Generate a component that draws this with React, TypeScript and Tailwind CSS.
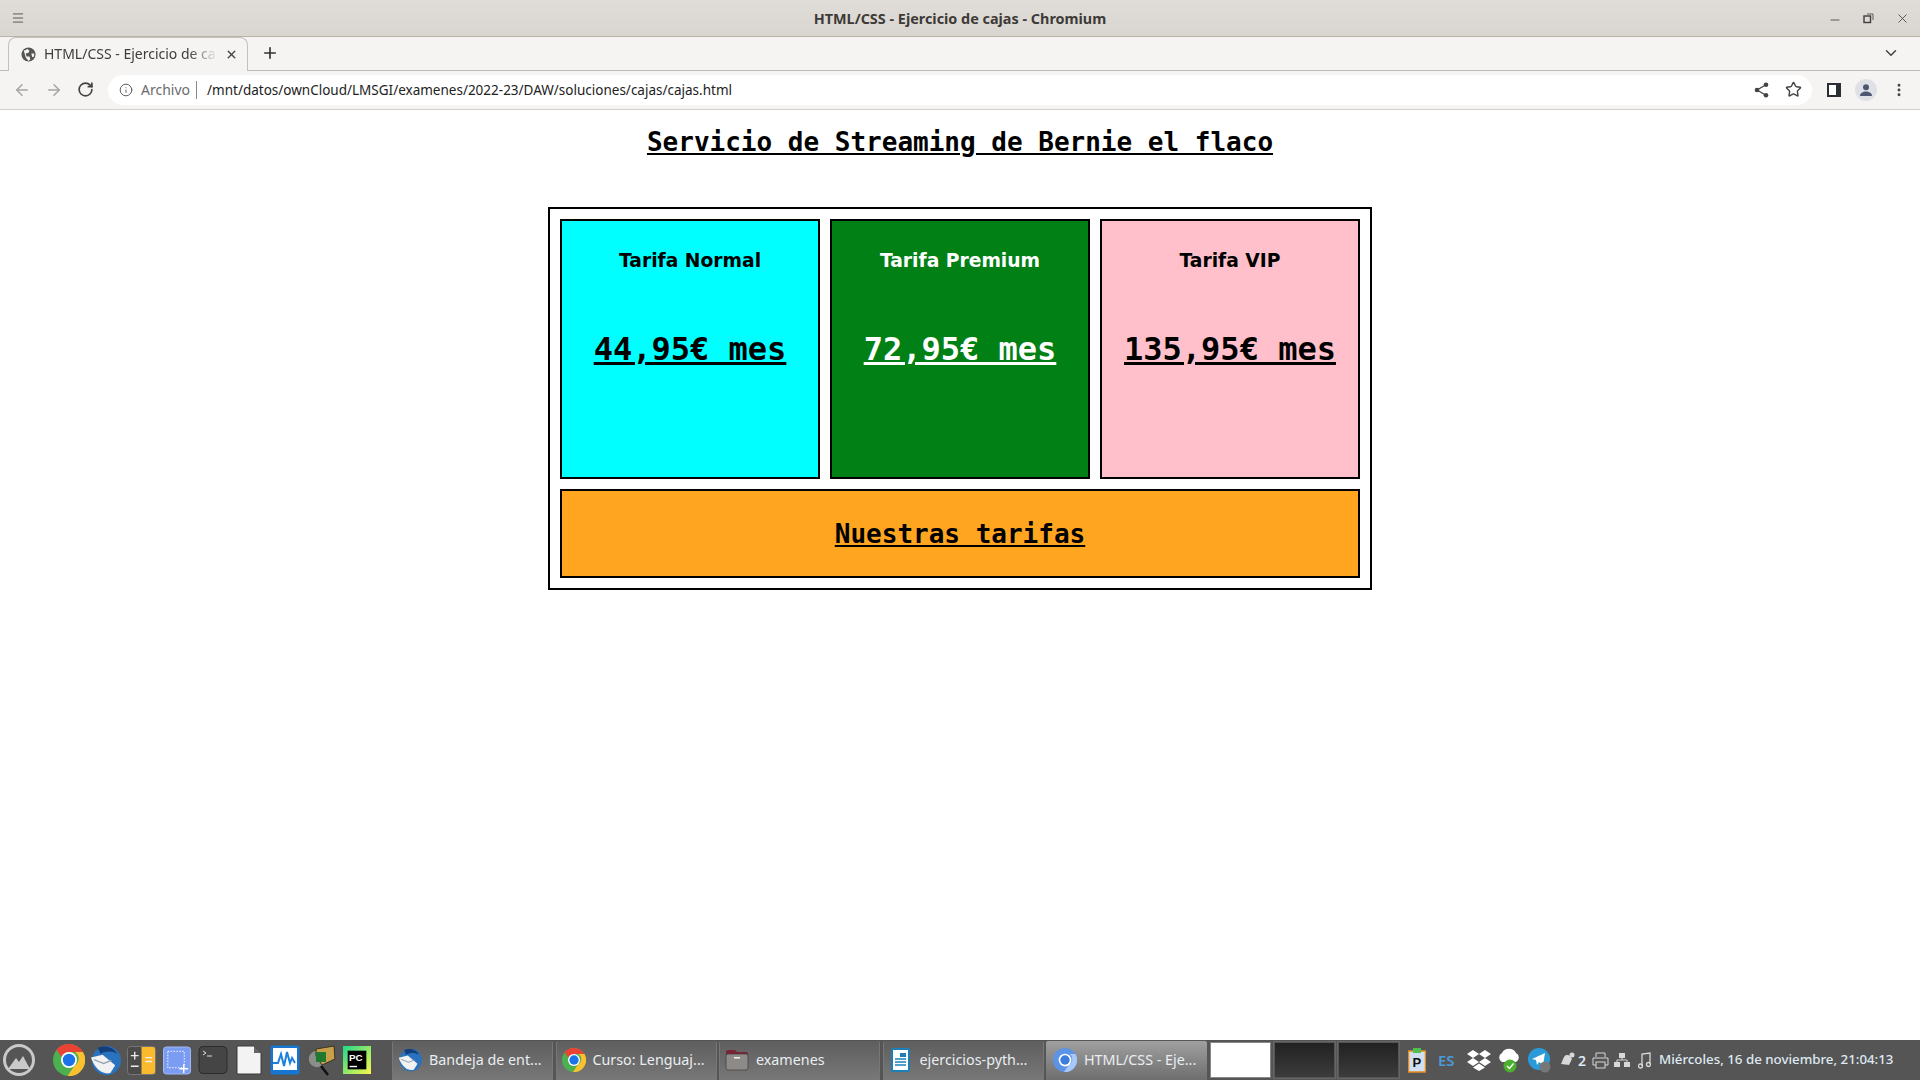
import { ArrowLeft, ArrowRight, ChevronDown, EllipsisVertical, Info, Menu, Minus, Plus, RotateCw, Star, X } from "lucide-react";

const uiFont = "font-['Noto_Sans',sans-serif]";

const ChromeLogo = ({ size = 32 }: { size?: number }) => (
  <svg width={size} height={size} viewBox="0 0 32 32">
    <circle cx="16" cy="16" r="16" fill="#4caf50" />
    <path d="M16 0a16 16 0 0 1 13.9 8H16a8 8 0 0 0-7.4 5L3.4 5.6A16 16 0 0 1 16 0z" fill="#ea4335" />
    <path d="M29.9 8A16 16 0 0 1 14.6 32l6.9-10.3A8 8 0 0 0 22 8z" fill="#fbc02d" />
    <circle cx="16" cy="16" r="8" fill="#fff" />
    <circle cx="16" cy="16" r="6.2" fill="#1a73e8" />
  </svg>
);

const ChromiumLogo = () => (
  <svg width={24} height={24} viewBox="0 0 32 32">
    <circle cx="16" cy="16" r="16" fill="#5b93e6" />
    <path d="M29.9 8A16 16 0 0 1 14.6 32l6.9-10.3A8 8 0 0 0 22 8z" fill="#a9c7f7" />
    <circle cx="16" cy="16" r="8.5" fill="#fff" />
    <circle cx="16" cy="16" r="6.3" fill="#3d7ddb" />
  </svg>
);

const Thunderbird = ({ size = 31 }: { size?: number }) => (
  <svg width={size} height={size} viewBox="0 0 32 32" className="shrink-0">
    <circle cx="17" cy="16" r="15" fill="#2a72bd" />
    <path d="M8 3c6-3 16-2 20 6-5-3-12-3-17 0z" fill="#123f7a" />
    <path d="M1 13l12-3 13 11-5 8C13 31 5 25 1 13z" fill="#f2f2f2" />
    <path d="M4 15l10 4 8-3" fill="none" stroke="#9aa7b5" strokeWidth="1.4" />
  </svg>
);

const Calculator = () => (
  <svg width={29} height={29} viewBox="0 0 30 30" className="ml-[6px] shrink-0">
    <rect x="0.5" y="0.5" width="29" height="29" rx="3" fill="#4b4b4b" stroke="#777" />
    <path d="M15 1h12a2 2 0 0 1 2 2v24a2 2 0 0 1-2 2H15z" fill="#fbb92d" />
    <path d="M4 10h8M8 6v8M4 21h8M19 12h7M19 16h7" stroke="#eee" strokeWidth="1.4" />
  </svg>
);

const ScreenshotTool = () => (
  <svg width={28} height={29} viewBox="0 0 29 29" className="ml-[7px] shrink-0">
    <rect x="0.5" y="0.5" width="28" height="28" rx="3" fill="#7a9cf2" stroke="#a5bbf5" />
    <rect x="5" y="5" width="17" height="17" fill="none" stroke="#fff" strokeDasharray="1.5 1.5" />
    <path d="M17 23h9M21.5 18.5v9" stroke="#fff" strokeWidth="1.4" />
  </svg>
);

const Terminal = () => (
  <svg width={30} height={30} viewBox="0 0 30 30" className="ml-[7px] shrink-0">
    <rect x="1" y="1.5" width="28" height="27" rx="4" fill="#454545" stroke="#2c2c2c" />
    <path d="M5 6l3 2-3 2M9 11h5" fill="none" stroke="#ddd" strokeWidth="1" />
  </svg>
);

const FileIcon = () => (
  <svg width={26} height={30} viewBox="0 0 26 30" className="ml-[8px] shrink-0">
    <path d="M1 1h17l7 7v21H1z" fill="#f3f3f3" stroke="#3a3a3a" strokeLinejoin="round" />
    <path d="M18 1l7 7h-7z" fill="#666" />
  </svg>
);

const MonitorIcon = () => (
  <svg width={30} height={30} viewBox="0 0 30 30" className="ml-[8px] shrink-0">
    <rect x="0.5" y="0.5" width="29" height="29" rx="2" fill="#1676d2" />
    <rect x="3" y="3" width="24" height="22" fill="#fff" />
    <path d="M3 18h5l3-9 3 12 3-14 3 11 2-5 3 5" fill="none" stroke="#1b80dd" strokeWidth="2" />
  </svg>
);

const MailScanner = () => (
  <svg width={30} height={32} viewBox="0 0 30 32" className="ml-[6px] shrink-0">
    <circle cx="11" cy="15" r="9" fill="#8a8f8a" stroke="#555" strokeWidth="1.5" />
    <path d="M10 5l18-3 1 13-13 6-6-9z" fill="#c9a04a" stroke="#3a3320" />
    <rect x="10" y="8" width="10" height="10" fill="#1f7a2f" />
    <path d="M15 22l7 9" stroke="#111" strokeWidth="2.5" />
  </svg>
);

const PyCharm = () => (
  <svg width={28} height={28} viewBox="0 0 30 30" className="ml-[7px] shrink-0">
    <defs>
      <linearGradient id="pc" x1="0" y1="0" x2="1" y2="1">
        <stop offset="0" stopColor="#21d789" />
        <stop offset="1" stopColor="#fcf84a" />
      </linearGradient>
    </defs>
    <rect width="30" height="30" fill="url(#pc)" />
    <rect x="5" y="5" width="20" height="20" fill="#000" />
    <path d="M7 22h8" stroke="#fff" strokeWidth="1.5" />
    <text x="6.5" y="16" fill="#fff" fontSize="10.5" fontWeight="700" fontFamily="Liberation Sans">PC</text>
  </svg>
);

const FolderIcon = () => (
  <svg width={24} height={24} viewBox="0 0 24 24">
    <path d="M1 4a2 2 0 0 1 2-2h7l2 2h9a2 2 0 0 1 2 2v3H1z" fill="#7b2335" />
    <rect x="1" y="6" width="22" height="16" rx="2" fill="#8d8a87" stroke="#3d3d3d" strokeWidth="0.7" />
    <rect x="9" y="9" width="6" height="1.6" fill="#eee" />
  </svg>
);

const WriterIcon = () => (
  <svg width={20} height={24} viewBox="0 0 20 24">
    <rect width="19" height="24" rx="2" fill="#1c80b6" />
    <rect x="2" y="2" width="15" height="20" fill="#fff" />
    <rect x="9" y="5" width="6" height="4" fill="#1c80b6" />
    <path d="M4 11h11M4 14h11M4 17h11" stroke="#1c80b6" strokeWidth="1.4" />
  </svg>
);

const taskButtons = [
  { label: "Bandeja de ent...", icon: <Thunderbird size={24} /> },
  { label: "Curso: Lenguaj...", icon: <ChromeLogo size={24} /> },
  { label: "examenes", icon: <FolderIcon /> },
  { label: "ejercicios-pyth...", icon: <WriterIcon /> },
  { label: "HTML/CSS - Eje...", icon: <ChromiumLogo />, active: true },
];

const plans = [
  { name: "Tarifa Normal", price: "44,95€ mes", color: "bg-[#00ffff] text-black" },
  { name: "Tarifa Premium", price: "72,95€ mes", color: "bg-[#008015] text-white" },
  { name: "Tarifa VIP", price: "135,95€ mes", color: "bg-[#ffc0cb] text-black" },
];

const BrowserChrome = () => (
  <header className={`${uiFont} shrink-0 text-[#3c3c3c]`}>
    <div className="relative flex h-[37px] items-center justify-between border-b border-[#b9b2a9] bg-gradient-to-b from-[#e0ddd9] to-[#d9d6d1] pl-[11px] pr-[10px]">
      <Menu size={14} strokeWidth={1.3} className="text-[#333]" />
      <span className="absolute left-0 right-0 pt-px text-center text-[14.4px] font-bold text-[#3d3a37]">
        HTML/CSS - Ejercicio de cajas - Chromium
      </span>
      <div className="flex items-center gap-[19px] text-[#3d3d3d]">
        <Minus size={14} strokeWidth={1.4} className="mt-[4px]" />
        <svg width="15" height="15" viewBox="0 0 15 15" fill="none" stroke="#3d3d3d">
          <rect x="3" y="5" width="6.5" height="6.5" strokeWidth="1.4" />
          <path d="M6 3h6v6" strokeWidth="0.8" />
        </svg>
        <X size={15} strokeWidth={1.3} />
      </div>
    </div>
    <div className="flex h-[34px] items-end border-b border-[#bdbab5] bg-[#f5f4f2] pl-[8px] pr-[20px]">
      <div className="relative -mb-px flex h-[34px] w-[240px] items-center rounded-t-[8px] border border-b-0 border-[#c4c1bc] bg-[#f5f4f2] pl-[12px] pr-[9px]">
        <svg width="15" height="15" viewBox="0 0 16 16" className="shrink-0">
          <circle cx="8" cy="8" r="7.5" fill="#555" />
          <path d="M3 4l4-2 2 2-1 2-3 1 1 3 3 0 1 3-2 2-3-4zM11 7h3l0 3-2 1z" fill="#f5f4f2" />
        </svg>
        <span className="ml-[8px] flex-1 whitespace-nowrap pb-px text-[14px] leading-[20px] text-[#3c3c3c] [mask-image:linear-gradient(to_right,black_80%,transparent_96%)]">
          HTML/CSS - Ejercicio de ca
        </span>
        <X size={13} strokeWidth={2.6} className="shrink-0 text-[#444]" />
      </div>
      <Plus size={18} strokeWidth={2.2} className="mb-[8px] ml-[13px] text-[#333]" />
      <ChevronDown size={18} strokeWidth={2} className="mb-[8px] ml-auto text-[#444]" />
    </div>
    <div className="flex h-[39px] items-center border-b border-[#d2d0cb] bg-[#f5f4f2] pb-px pl-[13px] pr-[13px]">
      <ArrowLeft size={18} strokeWidth={2} className="text-[#a5a5a5]" />
      <ArrowRight size={18} strokeWidth={2} className="ml-[14px] text-[#a5a5a5]" />
      <RotateCw size={17} strokeWidth={2.4} className="ml-[14px] text-[#444]" />
      <div className="ml-[14px] flex h-[30px] flex-1 items-center rounded-full bg-white pl-[11px] pr-[10px]">
        <Info size={14} strokeWidth={1.6} className="text-[#555]" />
        <span className="ml-[8px] text-[14px] text-[#6b6b6b]">Archivo</span>
        <span className="ml-[6px] h-[18px] w-px bg-[#888]" />
        <span className="ml-[10px] pt-px text-[13.5px] text-[#222]">/mnt/datos/ownCloud/LMSGI/examenes/2022-23/DAW/soluciones/cajas/cajas.html</span>
        <svg width="15" height="16" viewBox="0 0 15 16" fill="#444" className="ml-auto">
          <circle cx="12" cy="2.800" r="2.300" />
          <circle cx="12" cy="13.200" r="2.300" />
          <circle cx="3" cy="8" r="2.300" />
          <path d="M12 2.800L3 8l9 5.200" fill="none" stroke="#444" strokeWidth="1.300" />
        </svg>
        <Star size={17} strokeWidth={2} className="ml-[16px] text-[#444]" />
      </div>
      <svg width="14" height="14" viewBox="0 0 14 14" className="ml-[15px]">
        <rect width="14" height="14" fill="#2b2f33" />
        <rect x="2" y="2" width="7" height="10" fill="#fff" />
      </svg>
      <div className="ml-[14px] flex h-[22px] w-[22px] items-center justify-center rounded-full bg-[#dfe1e7]">
        <svg width="14" height="14" viewBox="0 0 14 14" fill="#4c5872">
          <circle cx="7" cy="4.2" r="3" />
          <path d="M1 13c0-3 3-4.5 6-4.5s6 1.500 6 4.500z" />
        </svg>
      </div>
      <EllipsisVertical size={16} strokeWidth={2.4} className="ml-[14px] text-[#444]" />
    </div>
  </header>
);

const Taskbar = () => (
  <footer className={`${uiFont} flex h-[40px] shrink-0 items-center bg-[#555555] text-[14.3px] text-[#e9eef2]`}>
    <div className="flex h-full w-[392px] shrink-0 items-center pl-[3px]">
      <svg width="32" height="32" viewBox="0 0 32 32" fill="none">
        <circle cx="16" cy="16" r="14.5" stroke="#c9c9c9" strokeWidth="3" />
        <path d="M5 25l8-11 3 4 4-6 7 13z" fill="#c9c9c9" />
      </svg>
      <div className="ml-[18px] flex items-center">
        <ChromeLogo />
        <span className="ml-[5px]">
          <Thunderbird />
        </span>
        <Calculator />
        <ScreenshotTool />
        <Terminal />
        <FileIcon />
        <MonitorIcon />
        <MailScanner />
        <PyCharm />
      </div>
    </div>
    <div className="flex h-full items-stretch gap-[2.5px] pt-px">
      {taskButtons.map((b) => (
        <div
          key={b.label}
          className={`flex w-[161px] items-center gap-[6px] rounded-t-[2px] pb-px ${b.active ? "bg-gradient-to-b from-[#a0a0a0] to-[#6e6e6e] pl-[6px]" : "border-x border-[#777] bg-gradient-to-b from-[#5e5e5e] to-[#787878] pl-[4px]"}`}
        >
          <span className="flex w-[26px] shrink-0 justify-center">{b.icon}</span>
          <span className="whitespace-nowrap">{b.label}</span>
        </div>
      ))}
    </div>
    <div className="ml-[3px] flex h-[36px] items-center gap-[3px]">
      <div className="h-[36px] w-[61px] border border-[#888] bg-white" />
      <div className="h-[36px] w-[61px] border border-[#555] bg-gradient-to-b from-[#222] to-[#3c3c3c] outline outline-1 outline-[#666]" />
      <div className="h-[36px] w-[61px] border border-[#555] bg-gradient-to-b from-[#222] to-[#3c3c3c] outline outline-1 outline-[#666]" />
    </div>
    <div className="ml-[9px] flex h-full flex-1 items-center whitespace-nowrap">
      <svg width="18" height="26" viewBox="0 0 18 26">
        <rect x="0.5" y="4" width="17" height="21" fill="#cfe0f5" stroke="#e98a1c" strokeWidth="1.5" />
        <rect x="5" y="1" width="8" height="5" fill="#4fc04f" />
        <text x="4.500" y="20" fontSize="13" fontWeight="700" fill="#111" fontFamily="Liberation Sans">P</text>
      </svg>
      <span className="ml-[12px] w-[17px] text-[15px] font-semibold text-[#4a9ad8]">ES</span>
      <svg width="24" height="22" viewBox="0 0 24 22" fill="#fff" className="ml-[12px]">
        <path d="M6 1l6 4-6 4-6-4zM18 1l6 4-6 4-6-4zM6 9l6 4-6 4-6-4zM18 9l6 4-6 4-6-4zM6 18.500l6-4 6 4-6 3.500z" />
      </svg>
      <svg width="24" height="30" viewBox="0 0 24 30" className="ml-[6px]">
        <path d="M5 17a5 5 0 0 1 0-9 8 8 0 0 1 14 0 5 5 0 0 1 0 9z" fill="#fff" />
        <circle cx="13" cy="21" r="6.500" fill="#4caf2e" />
        <path d="M10 21l2.500 2.500 4-5" fill="none" stroke="#fff" strokeWidth="1.400" />
      </svg>
      <svg width="24" height="26" viewBox="0 0 24 26" className="ml-[7px]">
        <circle cx="11" cy="12" r="11" fill="#2a9bd8" />
        <path d="M4 12l13-6-2 12-4-3-2 3-1-5z" fill="#fff" />
        <circle cx="17" cy="20" r="5.500" fill="#777" />
      </svg>
      <svg width="15" height="16" viewBox="0 0 15 16" fill="#d8d8d8" className="ml-[8px]">
        <path d="M1 12l3-7a4 4 0 0 1 6-1l2 3-3 6z" />
        <circle cx="12" cy="3" r="2.500" />
      </svg>
      <span className="ml-[3px] text-[14px] font-semibold text-[#dfe9f3]">2</span>
      <svg width="17" height="17" viewBox="0 0 17 17" fill="none" stroke="#d8d8d8" className="ml-[6px]">
        <path d="M4 5V1h9v4M4 13H1V6h15v7h-3" />
        <rect x="4" y="10" width="9" height="6" />
      </svg>
      <svg width="18" height="16" viewBox="0 0 18 16" fill="#d8d8d8" className="ml-[4px]">
        <rect x="6" y="1" width="6" height="5" />
        <rect x="1" y="10" width="6" height="5" />
        <rect x="11" y="10" width="6" height="5" />
        <path d="M9 6v2M4 10V8h10v2" fill="none" stroke="#d8d8d8" />
      </svg>
      <svg width="13" height="17" viewBox="0 0 13 17" fill="none" stroke="#d8d8d8" strokeWidth="1.300" className="ml-[7px]">
        <path d="M4 14V2l8-1v11" />
        <circle cx="2.500" cy="14" r="2" />
        <circle cx="10.500" cy="12.500" r="2" />
      </svg>
      <span className="ml-[8px] text-[13.3px] font-medium text-[#dfe9f3]">Miércoles, 16 de noviembre, 21:04:13</span>
    </div>
  </footer>
);

export default function App() {
  return (
    <div className="flex h-screen w-full flex-col overflow-hidden bg-white">
      <BrowserChrome />
      <main className="flex flex-1 flex-col items-center font-['DejaVu_Sans_Mono',monospace] text-black">
        <h1 className="mt-[16px] text-[26px] font-bold leading-[32px] underline">
          Servicio de Streaming de Bernie el flaco
        </h1>
        <section className="mt-[49px] w-[824px] border-2 border-black p-[10px]">
          <div className="grid grid-cols-3 gap-[10px]">
            {plans.map((plan) => (
              <article key={plan.name} className={`flex h-[260px] flex-col items-center border-2 border-black ${plan.color}`}>
                <h2 className="mt-[28px] font-['DejaVu_Sans',sans-serif] text-[18.72px] font-bold leading-[24px]">{plan.name}</h2>
                <p className="mt-[56px] text-[32px] font-bold leading-[40px] underline">{plan.price}</p>
              </article>
            ))}
          </div>
          <div className="mt-[10px] flex h-[89px] items-center justify-center border-2 border-black bg-[#ffa520] pt-px text-[26px] font-bold underline">
            Nuestras tarifas
          </div>
        </section>
      </main>
      <Taskbar />
    </div>
  );
}
